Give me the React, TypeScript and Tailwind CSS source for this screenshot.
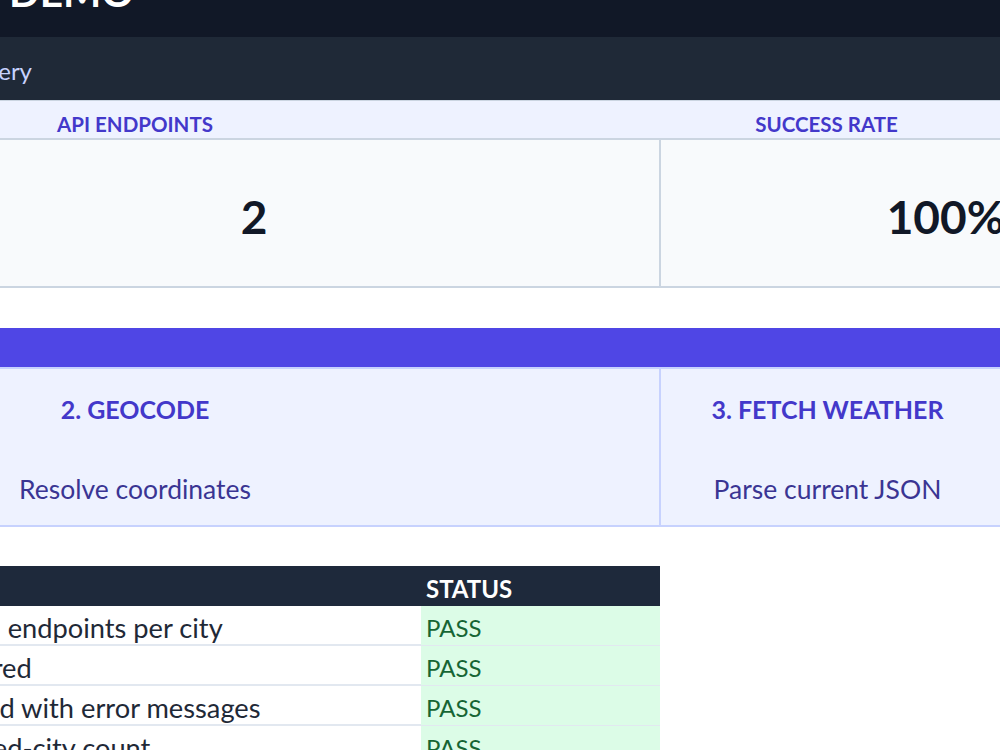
const FONT = { fontFamily: '"Lato", "Noto Sans", sans-serif' };

const CHECKS = [
  { text: 'Calls 2 API\u00A0 endpoints per city', pad: 'pl-[17px]' },
  { text: 'Data captured', pad: 'pl-[13px]' },
  { text: 'Error handled with error messages', pad: 'pl-[4px]' },
  { text: 'Reports failed-city count', pad: 'pl-[8px]' },
];

export default function App() {
  return (
    <div className="h-[750px] w-[1000px] overflow-hidden bg-white" style={FONT}>
      {/* sheet runs past the top and left edge of the window */}
      <div className="-mt-[23px] -ml-[151px] w-[1381px]">
        <div className="flex h-[60px] items-end bg-[#111827] pb-[25px] pl-[160px] text-[40.5px] leading-none font-bold text-white">
          DEMO
        </div>
        <div className="flex h-[63px] items-center justify-end bg-[#1f2937] pt-[4px] pr-[1198px] text-[24px] whitespace-nowrap text-[#c7d2fe]">
          Weather Query
        </div>

        <div className="grid grid-cols-[572px_238px_335px_236px]">
          <div className="flex h-[40px] items-center justify-center border-y border-b-2 border-[#cbd5e1] bg-[#eef2ff] pt-[9px] text-[20.5px] leading-[24px] font-bold text-[#4338ca]">
            API ENDPOINTS
          </div>
          <div className="border-y border-b-2 border-[#cbd5e1] bg-[#eef2ff]" />
          <div className="flex items-center justify-center border-y border-b-2 border-[#cbd5e1] bg-[#eef2ff] pt-[9px] text-[20.5px] leading-[24px] font-bold text-[#4338ca]">
            SUCCESS RATE
          </div>
          <div className="border-y border-b-2 border-[#cbd5e1] bg-[#eef2ff]" />

          <div className="col-span-2 flex h-[148px] items-center justify-center border-b-2 border-[#cbd5e1] bg-[#f8fafc] pt-[6px] text-[46px] font-bold text-[#111827]">
            2
          </div>
          <div className="col-span-2 flex items-center justify-center border-b-2 border-l-2 border-[#cbd5e1] bg-[#f8fafc] pt-[6px] text-[46px] font-bold text-[#111827]">
            100%
          </div>
        </div>

        <div className="mt-[40px] h-[39px] bg-[#4f46e5]" />

        <div className="grid h-[160px] grid-cols-[572px_238px_335px_236px] border-y-2 border-[#c7d2fe] bg-[#eef2ff]">
          <div className="flex flex-col items-center pt-[24px]">
            <div className="text-[25px] leading-[32px] font-bold text-[#4338ca]">2. GEOCODE</div>
            <div className="mt-[48px] text-[26.5px] leading-[32px] text-[#3a3593]">Resolve coordinates</div>
          </div>
          <div />
          <div className="flex flex-col items-center border-l-2 border-[#c7d2fe] pt-[24px]">
            <div className="text-[25px] leading-[32px] font-bold text-[#4338ca]">3. FETCH WEATHER</div>
            <div className="mt-[48px] text-[26.5px] leading-[32px] text-[#3a3593]">Parse current JSON</div>
          </div>
          <div />
        </div>

        <div className="mt-[39px] w-[811px]">
          <div className="grid h-[40px] grid-cols-[572px_239px] items-center bg-[#1e293b] pt-[5px] text-[24px] leading-[30px] font-bold text-white">
            <div />
            <div className="pl-[5px]">STATUS</div>
          </div>
          {CHECKS.map((c) => (
            <div key={c.text} className="grid h-[40px] grid-cols-[572px_239px] border-b-2 border-[#e2e8f0] whitespace-nowrap text-[#1f2937]">
              <div className={`${c.pad} pt-[5px] text-[27.25px] leading-[34px]`}>{c.text}</div>
              <div className="bg-[#dcfce7] pt-[7px] pl-[5px] text-[24px] leading-[30px] text-[#166534]">PASS</div>
            </div>
          ))}
        </div>
      </div>
    </div>
  );
}
